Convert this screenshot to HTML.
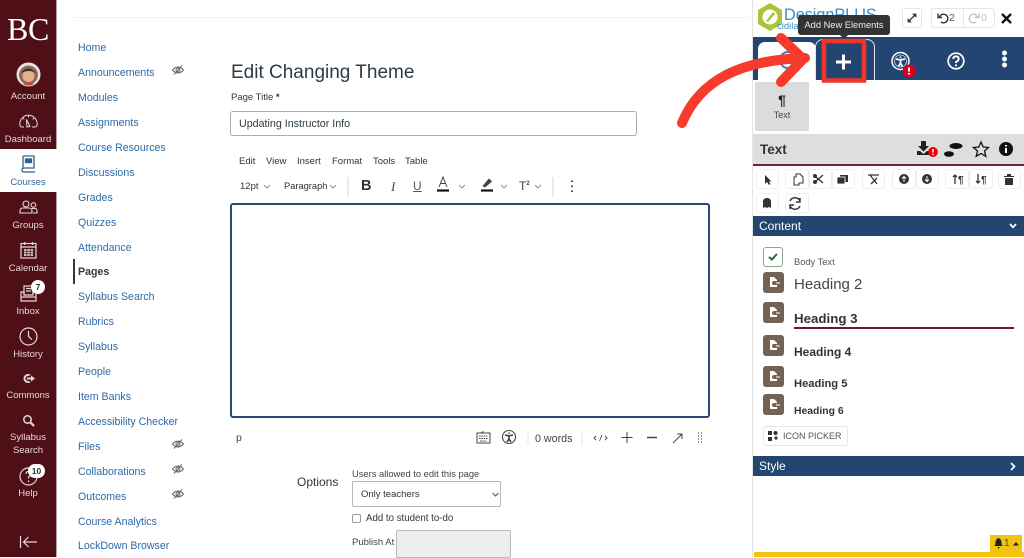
<!DOCTYPE html>
<html><head><meta charset="utf-8"><style>
html,body{margin:0;padding:0}
body{width:1024px;height:557px;position:relative;overflow:hidden;background:#fff;font-family:"Liberation Sans",sans-serif;color:#2d3b45}
.a{position:absolute;white-space:nowrap}
#side{position:absolute;left:0;top:0;width:56px;height:557px;background:#4e0f17;border-right:1px solid #b9a0a3}
.s{position:absolute;left:0;width:56px;text-align:center;color:#e4d8d9;font-size:9.5px;line-height:12px}
.n{position:absolute;left:78px;color:#2d6aa8;font-size:10.6px;line-height:14px;white-space:nowrap}
.eye{position:absolute;left:172px}
.tb{position:absolute;top:169px;height:20px;background:#fff;border:1px solid #eee;border-radius:3px;box-sizing:border-box}
.ib{position:absolute;left:763px;width:21px;height:21px;background:#736357;border-radius:3px}
.h{position:absolute;left:794px;white-space:nowrap;color:#333}
</style></head><body>
<div id="side"></div>
<div class="a" style="left:7px;top:11px;font:32px 'Liberation Serif',serif;color:#fff;letter-spacing:-.3px">BC</div>
<svg class="a" style="left:16px;top:62px" width="25" height="25" viewBox="0 0 25 25"><circle cx="12.5" cy="12.5" r="12" fill="#e9e4e1"/><circle cx="12.5" cy="13" r="9.5" fill="#8c6a55"/><circle cx="12.5" cy="14" r="6" fill="#e2b08f"/><path d="M5 11Q12 2 20 11Q13 7 5 11Z" fill="#3c2c25"/><path d="M7 22Q12.5 18 18 22L15 23.5H10Z" fill="#c8473f"/></svg>
<div class="s" style="top:91px">Account</div>
<svg class="a" style="left:19px;top:114px" width="19" height="14" viewBox="0 0 19 14" fill="none" stroke="#e4d8d9" stroke-width="1"><path d="M5 13H3Q.8 13 .8 10A8.700 8.700 0 0 1 18.200 10Q18.200 13 16 13H13"/><path d="M7.500 5.500L11 12.500L8 13Z"/><path d="M9.500 1.500V3.500M4 4L5.300 5.300M15 4L13.700 5.300"/></svg>
<div class="s" style="top:134px">Dashboard</div>
<div class="a" style="left:0;top:149px;width:57px;height:43px;background:#fff"></div>
<svg class="a" style="left:21px;top:155px" width="15" height="18" viewBox="0 0 15 18" fill="none" stroke="#33618f" stroke-width="1.3"><path d="M2 14V2Q2 1 3 1H13V13H3Q1 13 1 15T3 17H14"/><rect x="4.5" y="4" width="6" height="3.5" fill="#33618f"/></svg>
<div class="s" style="top:177px;color:#33689c">Courses</div>
<svg class="a" style="left:19px;top:200px" width="19" height="14" viewBox="0 0 19 14" fill="none" stroke="#e4d8d9" stroke-width="1.1"><circle cx="7" cy="4" r="3"/><path d="M1 13V11Q1 8 4 8H10Q13 8 13 11V13Z"/><circle cx="14.5" cy="5" r="2.3"/><path d="M13 8.5H16Q18 8.5 18 11V13H14"/></svg>
<div class="s" style="top:220px">Groups</div>
<svg class="a" style="left:20px;top:241px" width="17" height="18" viewBox="0 0 17 18" fill="none" stroke="#e4d8d9" stroke-width="1.2"><rect x="1" y="2.500" width="15" height="14.500"/><path d="M1 6H16M4.500 1V4M12.500 1V4"/><path d="M4 9H13M4 11.500H13M4 14H13" stroke-width="1.700" stroke-dasharray="2.500 .8"/></svg>
<div class="s" style="top:263px">Calendar</div>
<svg class="a" style="left:19px;top:285px" width="19" height="17" viewBox="0 0 19 17" fill="none" stroke="#e4d8d9" stroke-width="1.2"><path d="M5 9V1H14V9M7 3.500H12M7 6H12"/><path d="M2 7H5V10H14V7H17V12H2ZM2 12V16H17V12"/></svg>
<div class="a" style="left:31px;top:280px;width:14px;height:14px;border-radius:7px;background:#fff;color:#333;font:bold 8.500px/14px 'Liberation Sans',sans-serif;text-align:center">7</div>
<div class="s" style="top:306px">Inbox</div>
<svg class="a" style="left:19px;top:327px" width="19" height="19" viewBox="0 0 19 19" fill="none" stroke="#e4d8d9" stroke-width="1.2"><circle cx="9.500" cy="9.500" r="8.500"/><path d="M9.500 4V9.500L13 12.500"/></svg>
<div class="s" style="top:349px">History</div>
<svg class="a" style="left:22px;top:373px" width="13" height="11" viewBox="0 0 13 11"><path d="M6 1A4.500 4.500 0 1 0 6 10A4.500 4.500 0 0 0 9 9L6 8A2.500 2.500 0 1 1 6 3L9 2Q8 1 6 1Z" fill="#e4d8d9"/><path d="M5 4.500H9V2.500L13 5.500L9 8.500V6.500H5Z" fill="#e4d8d9"/></svg>
<div class="s" style="top:390px">Commons</div>
<svg class="a" style="left:22px;top:414px" width="13" height="13" viewBox="0 0 13 13" fill="none" stroke="#e4d8d9"><circle cx="5.500" cy="5.500" r="3.700" stroke-width="1.500"/><path d="M8.500 8.500L12 12" stroke-width="2.200"/></svg>
<div class="s" style="top:432px">Syllabus</div>
<div class="s" style="top:445px">Search</div>
<svg class="a" style="left:19px;top:467px" width="19" height="19" viewBox="0 0 19 19" fill="none" stroke="#e4d8d9" stroke-width="1.2"><circle cx="9.500" cy="9.500" r="8.500"/><path d="M7 7Q7 4.500 9.500 4.500T12 7Q12 8.500 9.500 10V11.500M9.500 13.500V15"/></svg>
<div class="a" style="left:28px;top:464px;width:17px;height:14px;border-radius:7px;background:#fff;color:#333;font:bold 8.500px/14px 'Liberation Sans',sans-serif;text-align:center">10</div>
<div class="s" style="top:488px">Help</div>
<svg class="a" style="left:19px;top:535px" width="19" height="14" viewBox="0 0 19 14" fill="none" stroke="#e4d8d9" stroke-width="1.200"><path d="M1.500 1V13M18 7H4.500M9.500 2L4.500 7L9.500 12"/></svg>

<div class="a" style="left:73px;top:17px;width:677px;height:1px;background:#f2f2f2"></div>
<div class="n" style="top:41px">Home</div>
<div class="n" style="top:66px">Announcements</div>
<div class="n" style="top:91px">Modules</div>
<div class="n" style="top:116px">Assignments</div>
<div class="n" style="top:141px">Course Resources</div>
<div class="n" style="top:166px">Discussions</div>
<div class="n" style="top:191px">Grades</div>
<div class="n" style="top:216px">Quizzes</div>
<div class="n" style="top:241px">Attendance</div>
<div class="a" style="left:73px;top:259px;width:2px;height:25px;background:#2d3b45"></div>
<div class="n" style="top:265px;color:#2d3b45;font-weight:bold">Pages</div>
<div class="n" style="top:290px">Syllabus Search</div>
<div class="n" style="top:315px">Rubrics</div>
<div class="n" style="top:340px">Syllabus</div>
<div class="n" style="top:365px">People</div>
<div class="n" style="top:390px">Item Banks</div>
<div class="n" style="top:415px">Accessibility Checker</div>
<div class="n" style="top:440px">Files</div>
<div class="n" style="top:465px">Collaborations</div>
<div class="n" style="top:490px">Outcomes</div>
<div class="n" style="top:515px">Course Analytics</div>
<div class="n" style="top:539px">LockDown Browser</div>
<svg class="eye" style="top:65px" width="12" height="10" viewBox="0 0 12 10" fill="none" stroke="#666" stroke-width="1"><path d="M.500 5Q6 -1 11.500 5Q6 11 .500 5Z"/><circle cx="6" cy="5" r="2"/><path d="M2 9.500L10 .500"/></svg>
<svg class="eye" style="top:439px" width="12" height="10" viewBox="0 0 12 10" fill="none" stroke="#666" stroke-width="1"><path d="M.500 5Q6 -1 11.500 5Q6 11 .500 5Z"/><circle cx="6" cy="5" r="2"/><path d="M2 9.500L10 .500"/></svg>
<svg class="eye" style="top:464px" width="12" height="10" viewBox="0 0 12 10" fill="none" stroke="#666" stroke-width="1"><path d="M.500 5Q6 -1 11.500 5Q6 11 .500 5Z"/><circle cx="6" cy="5" r="2"/><path d="M2 9.500L10 .500"/></svg>
<svg class="eye" style="top:489px" width="12" height="10" viewBox="0 0 12 10" fill="none" stroke="#666" stroke-width="1"><path d="M.500 5Q6 -1 11.500 5Q6 11 .500 5Z"/><circle cx="6" cy="5" r="2"/><path d="M2 9.500L10 .500"/></svg>

<div class="a" style="left:231px;top:60px;font-size:19px;line-height:26px;color:#2d3b45">Edit Changing Theme</div>
<div class="a" style="left:231px;top:91px;font-size:9.500px;line-height:13px">Page Title <b>*</b></div>
<div class="a" style="left:230px;top:111px;width:407px;height:25px;box-sizing:border-box;border:1px solid #a5aeb4;border-radius:3px;font-size:10.700px;line-height:24px;padding-left:8px">Updating Instructor Info</div>
<div class="a" style="left:239px;top:155px;font-size:9.500px;line-height:13px;color:#333">Edit</div>
<div class="a" style="left:266px;top:155px;font-size:9.500px;line-height:13px;color:#333">View</div>
<div class="a" style="left:297px;top:155px;font-size:9.500px;line-height:13px;color:#333">Insert</div>
<div class="a" style="left:332px;top:155px;font-size:9.500px;line-height:13px;color:#333">Format</div>
<div class="a" style="left:373px;top:155px;font-size:9.500px;line-height:13px;color:#333">Tools</div>
<div class="a" style="left:405px;top:155px;font-size:9.500px;line-height:13px;color:#333">Table</div>
<div class="a" style="left:240px;top:180px;font-size:9.500px;line-height:13px;color:#333">12pt</div>
<div class="a" style="left:284px;top:180px;font-size:9.300px;line-height:13px;color:#333">Paragraph</div>
<svg class="a" style="left:230px;top:172px" width="360" height="30" viewBox="0 0 360 30" fill="none" stroke="#777" stroke-width=".8"><path d="M34 13L37 16L40 13M100 13L103 16L106 13M229 13L232 16L235 13M271 13L274 16L277 13M305 13L308 16L311 13"/><path d="M118 5V25M323 5V25" stroke="#ccc"/><path d="M207 18.500H219" stroke="#111" stroke-width="2.200"/><path d="M251 18.500H263" stroke="#111" stroke-width="2.200"/><path d="M209 15L213 5L217 15M210.300 11.500H215.700" stroke="#444" stroke-width="1"/><path d="M253 14L259 7L261.500 9.500L255 15Z" fill="#444" stroke="#444"/><path d="M342 8.500V10M342 13.500V15M342 18.500V20" stroke="#333" stroke-width="1.800"/></svg>
<div class="a" style="left:361px;top:177px;font:bold 14.500px/18px 'Liberation Sans',sans-serif;color:#333">B</div>
<div class="a" style="left:391px;top:178px;font:italic 13px/17px 'Liberation Serif',serif;color:#444">I</div>
<div class="a" style="left:413px;top:179px;font-size:12px;line-height:14px;color:#555;text-decoration:underline">U</div>
<div class="a" style="left:519px;top:179px;font-size:12px;line-height:14px;color:#444">T<sup style="font-size:6px;font-weight:bold;line-height:0">2</sup></div>
<div class="a" style="left:230px;top:203px;width:480px;height:215px;box-sizing:border-box;border:2px solid #2b4a73;border-radius:3px"></div>
<div class="a" style="left:236px;top:431px;font-size:10.500px;line-height:14px;color:#444">p</div>
<svg class="a" style="left:474px;top:428px" width="240" height="22" viewBox="0 0 240 22" fill="none" stroke="#444" stroke-width="1"><path d="M9 3Q9 5 6 5H3V15H16V5H6" /><path d="M5 8H14M5 10.500H14M6 13H13" stroke-dasharray="1.500 .8"/><circle cx="35" cy="9" r="6.500" stroke-width="1.100"/><path d="M35 4.500V5.800M31 7L35 7.800L39 7M35 7.800V11L33 14M35 11L37 14" stroke-width="1.600"/><path d="M54 3V17M108 3V17" stroke="#e4e4e4"/><path d="M122 8L120 10L122 12M131 8L133 10L131 12M128 7L125.500 13" stroke-width=".9"/><path d="M153 4V15M147.500 9.500H158.500"/><path d="M173 9.500H183" stroke-width="1.500"/><path d="M199 15L208 6M203 6H208V11"/><path d="M224 5H225M227 5H228M224 8H225M227 8H228M224 11H225M227 11H228M224 14H225M227 14H228" stroke-width="1.500" stroke="#777"/></svg>
<div class="a" style="left:535px;top:432px;font-size:10.700px;line-height:14px;color:#444">0 words</div>
<div class="a" style="left:297px;top:475px;font-size:12px;line-height:15px;color:#333">Options</div>
<div class="a" style="left:352px;top:468px;font-size:9.350px;line-height:12px;color:#444">Users allowed to edit this page</div>
<div class="a" style="left:352px;top:481px;width:149px;height:26px;box-sizing:border-box;border:1px solid #b3b8bd;border-radius:2px;font-size:9.500px;line-height:25px;padding-left:8px;color:#333">Only teachers</div>
<svg class="a" style="left:492px;top:492px" width="7" height="5" viewBox="0 0 7 5" fill="none" stroke="#555"><path d="M.500 1L3.500 4L6.500 1"/></svg>
<div class="a" style="left:352px;top:514px;width:9px;height:9px;box-sizing:border-box;border:1px solid #999;border-radius:2px"></div>
<div class="a" style="left:366px;top:513px;font-size:9.700px;line-height:12px;color:#333">Add to student to-do</div>
<div class="a" style="left:352px;top:537px;font-size:9.500px;line-height:12px;color:#444">Publish At</div>
<div class="a" style="left:396px;top:530px;width:115px;height:28px;box-sizing:border-box;background:#eee;border:1px solid #b8bcc0;border-radius:2px"></div>

<!-- right panel -->
<div class="a" style="left:752px;top:0;width:1px;height:557px;background:#e4e4e4"></div>
<svg class="a" style="left:757px;top:2px" width="26" height="30" viewBox="0 0 26 30"><path d="M13 1L25 8V22L13 29L1 22V8Z" fill="#a9c538"/><circle cx="13" cy="15" r="7.500" fill="#fff"/><path d="M9 19L16 10L18 12L11 20Z" fill="#a9c538"/></svg>
<div class="a" style="left:784px;top:5px;font-size:16.200px;line-height:20px;color:#3b8ec4">DesignPLUS</div>
<div class="a" style="left:777px;top:21px;font-size:9.500px;line-height:12px;color:#3b8ec4">cidilabs</div>
<div class="a" style="left:902px;top:8px;width:20px;height:20px;box-sizing:border-box;border:1px solid #e6e6e6;border-radius:3px"></div>
<svg class="a" style="left:907px;top:13px" width="10" height="10" viewBox="0 0 10 10" fill="none" stroke="#333" stroke-width="1.300"><path d="M2 8L8 2"/><path d="M5.500 1H9V4.500M1 5.500V9H4.500" fill="#333" stroke-width=".8"/></svg>
<div class="a" style="left:931px;top:8px;width:64px;height:20px;box-sizing:border-box;border:1px solid #e6e6e6;border-radius:3px"></div>
<div class="a" style="left:963px;top:8px;width:1px;height:20px;background:#e6e6e6"></div>
<svg class="a" style="left:937px;top:12px" width="12" height="12" viewBox="0 0 12 12" fill="none" stroke="#333" stroke-width="1.400"><path d="M2.500 5A4.300 4.300 0 1 1 4 10M1 1.500V5.500H5"/></svg>
<div class="a" style="left:949px;top:12px;font-size:10.500px;line-height:12px;color:#555">2</div>
<svg class="a" style="left:968px;top:12px" width="12" height="12" viewBox="0 0 12 12" fill="none" stroke="#bbb" stroke-width="1.200"><path d="M9.500 5A4.300 4.300 0 1 0 8 10M11 1.500V5.500H7"/></svg>
<div class="a" style="left:981px;top:12px;font-size:10.500px;line-height:12px;color:#bbb">0</div>
<svg class="a" style="left:1001px;top:13px" width="11" height="11" viewBox="0 0 11 11" stroke="#111" stroke-width="2.300"><path d="M1 1L10 10M10 1L1 10"/></svg>

<div class="a" style="left:753px;top:37px;width:271px;height:43px;background:#234572"></div>
<div class="a" style="left:758px;top:42px;width:58px;height:38px;background:#fff;border-radius:7px 7px 0 0"></div>
<svg class="a" style="left:778px;top:50px" width="20" height="20" viewBox="0 0 20 20" fill="none" stroke="#2f86c9" stroke-width="2"><circle cx="10" cy="10" r="8"/></svg>
<div class="a" style="left:815px;top:39px;width:60px;height:41px;box-sizing:border-box;border:1px solid #dfe6ee;border-bottom:0;border-radius:8px 8px 0 0"></div>
<svg class="a" style="left:890px;top:50px" width="30" height="28" viewBox="0 0 30 28"><circle cx="10.500" cy="11" r="8.500" fill="none" stroke="#fff" stroke-width="1.500"/><circle cx="10.500" cy="11" r="6" fill="none" stroke="#cfd8e3" stroke-width=".8"/><path d="M10.500 6.500V8M6 9L10.500 10L15 9M10.500 10V13L8.500 16.500M10.500 13L12.500 16.500" fill="none" stroke="#fff" stroke-width="1.700"/><circle cx="19" cy="21" r="6.500" fill="#d6001c"/><path d="M19 17.500V21.500M19 23V24.500" stroke="#fff" stroke-width="2"/></svg>
<svg class="a" style="left:947px;top:52px" width="18" height="18" viewBox="0 0 18 18" fill="none" stroke="#fff" stroke-width="1.700"><circle cx="9" cy="9" r="7.800"/><path d="M6.300 7Q6.300 4.300 9 4.300T11.700 7Q11.700 8.500 9 10V11M9 12.500V14.300" stroke-width="1.900"/></svg>
<svg class="a" style="left:1001px;top:50px" width="7" height="18" viewBox="0 0 7 18" fill="#fff"><circle cx="3.500" cy="3" r="2.500"/><circle cx="3.500" cy="9" r="2.500"/><circle cx="3.500" cy="15" r="2.500"/></svg>

<div class="a" style="left:755px;top:82px;width:54px;height:49px;background:#dcdcdc"></div>
<div class="a" style="left:755px;top:92px;width:54px;text-align:center;font:bold 14px/16px 'Liberation Sans',sans-serif;color:#222">¶</div>
<div class="a" style="left:755px;top:109px;width:54px;text-align:center;font-size:9px;line-height:12px;color:#444">Text</div>

<div class="a" style="left:753px;top:134px;width:271px;height:30px;background:#dedede;border-bottom:2px solid #6e2530"></div>
<div class="a" style="left:760px;top:141px;font-size:13.500px;line-height:17px;font-weight:bold;color:#333">Text</div>
<svg class="a" style="left:915px;top:140px" width="104" height="20" viewBox="0 0 104 20"><path d="M6 1H11V6H14L8.500 11.500L3 6H6Z M2 11H5L8.500 14L12 11H15V15H2Z" fill="#222"/><circle cx="18" cy="12" r="5" fill="#e00"/><path d="M18 9V12.500M18 13.800V15" stroke="#fff" stroke-width="1.500"/><ellipse cx="41" cy="6" rx="6.500" ry="3" fill="#111"/><ellipse cx="34" cy="14" rx="5" ry="2.800" fill="#111"/><path d="M66 2L68.200 7L73.500 7.500L69.500 11L70.800 16.300L66 13.500L61.200 16.300L62.500 11L58.500 7.500L63.800 7Z" fill="none" stroke="#111" stroke-width="1.300"/><circle cx="91" cy="9" r="7" fill="#111"/><path d="M91 5V6.500M91 8V13" stroke="#fff" stroke-width="2"/></svg>

<div class="tb" style="left:756px;width:23px"></div>
<div class="tb" style="left:785px;width:24px"></div><div class="tb" style="left:809px;width:23px"></div><div class="tb" style="left:832px;width:23px"></div>
<div class="tb" style="left:862px;width:23px"></div>
<div class="tb" style="left:892px;width:24px"></div><div class="tb" style="left:916px;width:23px"></div>
<div class="tb" style="left:945px;width:24px"></div><div class="tb" style="left:969px;width:24px"></div>
<div class="tb" style="left:998px;width:23px"></div>
<div class="tb" style="left:756px;top:193px;width:23px"></div><div class="tb" style="left:785px;top:193px;width:24px"></div>
<svg class="a" style="left:756px;top:169px" width="268" height="46" viewBox="0 0 268 46" fill="#333"><path d="M9 6V15L11 13L13 16L14.500 15L13 12.500H15.500Z"/><path d="M40 5H44L47 8V14H43V16H38V8H40Z" fill="none" stroke="#333"/><circle cx="59" cy="7" r="2"/><circle cx="59" cy="13" r="2"/><path d="M60 8L67 14M60 12L67 6" stroke="#333" stroke-width="1.300"/><rect x="84" y="6" width="8" height="7" /><rect x="81" y="8" width="8" height="7" stroke="#fff" stroke-width=".8"/><path d="M112 6H123M114 6L121 15M121 9L115 15" stroke="#333" stroke-width="1.300" fill="none"/><circle cx="148" cy="10" r="5"/><path d="M148 13V8M146 9.500L148 7.500L150 9.500" stroke="#fff" fill="none"/><circle cx="171" cy="10" r="5"/><path d="M171 7V12M169 10.500L171 12.500L173 10.500" stroke="#fff" fill="none"/><path d="M199 15V6M197 8L199 6L201 8" stroke="#333" stroke-width="1.300" fill="none"/><text x="202" y="14" font-size="10" font-weight="bold" font-family="Liberation Sans">¶</text><path d="M222 5V14M220 12L222 14L224 12" stroke="#333" stroke-width="1.300" fill="none"/><text x="225" y="14" font-size="10" font-weight="bold" font-family="Liberation Sans">¶</text><path d="M248 7H258V8H248ZM249 9H257V16H249Z M251 5H255V7H251Z"/><path d="M7 39V33Q7 29 11 29T15 33V39L13 38L11 39L9 38Z"/><path d="M34 32A5.500 5.500 0 0 1 44 32M44 29V33H40M44 37A5.500 5.500 0 0 1 34 37M34 40V36H38" fill="none" stroke="#333" stroke-width="1.500"/></svg>

<div class="a" style="left:753px;top:216px;width:271px;height:20px;background:#234572"></div>
<div class="a" style="left:759px;top:219px;font-size:12px;line-height:15px;color:#fff">Content</div>
<svg class="a" style="left:1009px;top:223px" width="8" height="6" viewBox="0 0 8 6" fill="none" stroke="#fff" stroke-width="1.700"><path d="M1 1L4 4.300L7 1"/></svg>

<div class="a" style="left:763px;top:247px;width:20px;height:20px;box-sizing:border-box;border:1px solid #8aa68f;border-radius:3px"></div>
<svg class="a" style="left:768px;top:253px" width="10" height="8" viewBox="0 0 10 8" fill="none" stroke="#236b2f" stroke-width="2"><path d="M1 4L3.800 6.500L9 1"/></svg>
<div class="h" style="top:256px;font-size:9.300px;line-height:12px;color:#555">Body Text</div>
<div class="ib" style="top:272px"></div>
<div class="h" style="top:276px;font-size:15px;line-height:18px;color:#444">Heading 2</div>
<div class="ib" style="top:302px"></div>
<div class="h" style="top:310px;font-size:13.300px;line-height:17px;font-weight:bold">Heading 3</div>
<div class="a" style="left:794px;top:327px;width:220px;height:1.500px;background:#6b1a26"></div>
<div class="ib" style="top:335px"></div>
<div class="h" style="top:345px;font-size:12px;line-height:15px;font-weight:bold">Heading 4</div>
<div class="ib" style="top:366px"></div>
<div class="h" style="top:377px;font-size:11.200px;line-height:15px;font-weight:bold">Heading 5</div>
<div class="ib" style="top:394px"></div>
<div class="h" style="top:404px;font-size:10.400px;line-height:15px;font-weight:bold">Heading 6</div>
<svg class="a" style="left:763px;top:272px" width="21" height="144" viewBox="0 0 21 144" fill="#fff"><path d="M7 5H11L14 8V9H11A2 2 0 0 0 11 13H14V15H7Z"/><path d="M13 11H17" stroke="#fff"/><path d="M7 35H11L14 38V39H11A2 2 0 0 0 11 43H14V45H7Z"/><path d="M13 41H17" stroke="#fff"/><path d="M7 68H11L14 71V72H11A2 2 0 0 0 11 76H14V78H7Z"/><path d="M13 74H17" stroke="#fff"/><path d="M7 99H11L14 102V103H11A2 2 0 0 0 11 107H14V109H7Z"/><path d="M13 105H17" stroke="#fff"/><path d="M7 127H11L14 130V131H11A2 2 0 0 0 11 135H14V137H7Z"/><path d="M13 133H17" stroke="#fff"/></svg>
<div class="a" style="left:763px;top:426px;width:85px;height:20px;box-sizing:border-box;border:1px solid #e6e6e6;border-radius:3px"></div>
<svg class="a" style="left:768px;top:431px" width="10" height="10" viewBox="0 0 10 10" fill="#333"><rect x="0" y="0" width="4" height="4"/><circle cx="7.500" cy="2" r="2"/><path d="M0 6H4V10H0Z"/><path d="M6 7H10M8 5V9" stroke="#333" stroke-width="1.300"/></svg>
<div class="a" style="left:783px;top:430px;font-size:9px;line-height:13px;color:#555">ICON PICKER</div>

<div class="a" style="left:753px;top:456px;width:271px;height:20px;background:#234572"></div>
<div class="a" style="left:759px;top:459px;font-size:12px;line-height:15px;color:#fff">Style</div>
<svg class="a" style="left:1010px;top:462px" width="6" height="9" viewBox="0 0 6 9" fill="none" stroke="#fff" stroke-width="1.700"><path d="M1 1L4.500 4.500L1 8"/></svg>

<div class="a" style="left:754px;top:552px;width:270px;height:5px;background:#f2c40f"></div>
<div class="a" style="left:990px;top:535px;width:32px;height:18px;background:#f2c40f"></div>
<svg class="a" style="left:994px;top:538px" width="9" height="11" viewBox="0 0 9 11" fill="#222"><path d="M4.500 0Q1.500 1 1.500 5Q1.500 7 0 8H9Q7.500 7 7.500 5Q7.500 1 4.500 0ZM3.300 9H5.700L4.500 11Z"/></svg>
<div class="a" style="left:1004px;top:538px;font-size:10px;line-height:12px;color:#444">1</div>
<svg class="a" style="left:1013px;top:542px" width="6" height="4" viewBox="0 0 6 4" fill="#222"><path d="M0 3.500L3 0L6 3.500Z"/></svg>

<!-- tooltip -->
<div class="a" style="left:798px;top:15px;width:92px;height:20px;background:#333;border-radius:3px;color:#eee;font-size:9.300px;line-height:20px;text-align:center">Add New Elements</div>
<div class="a" style="left:840px;top:35px;width:0;height:0;border:4px solid transparent;border-top-color:#333;border-bottom:0"></div>

<!-- annotations -->
<svg class="a" style="left:670px;top:30px" width="210" height="110" viewBox="0 0 210 110" fill="none"><path d="M166 32H181M173.500 24.500V39.500" stroke="#fff" stroke-width="3"/><rect x="154" y="11" width="40" height="39.500" stroke="#f0362b" stroke-width="4.500"/><path d="M12 93C30 50 70 30 135 28" stroke="#f63a2c" stroke-width="10" stroke-linecap="round"/><path d="M111 8L133 29L111 52" stroke="#f63a2c" stroke-width="10" stroke-linecap="round" stroke-linejoin="miter"/></svg>
</body></html>
